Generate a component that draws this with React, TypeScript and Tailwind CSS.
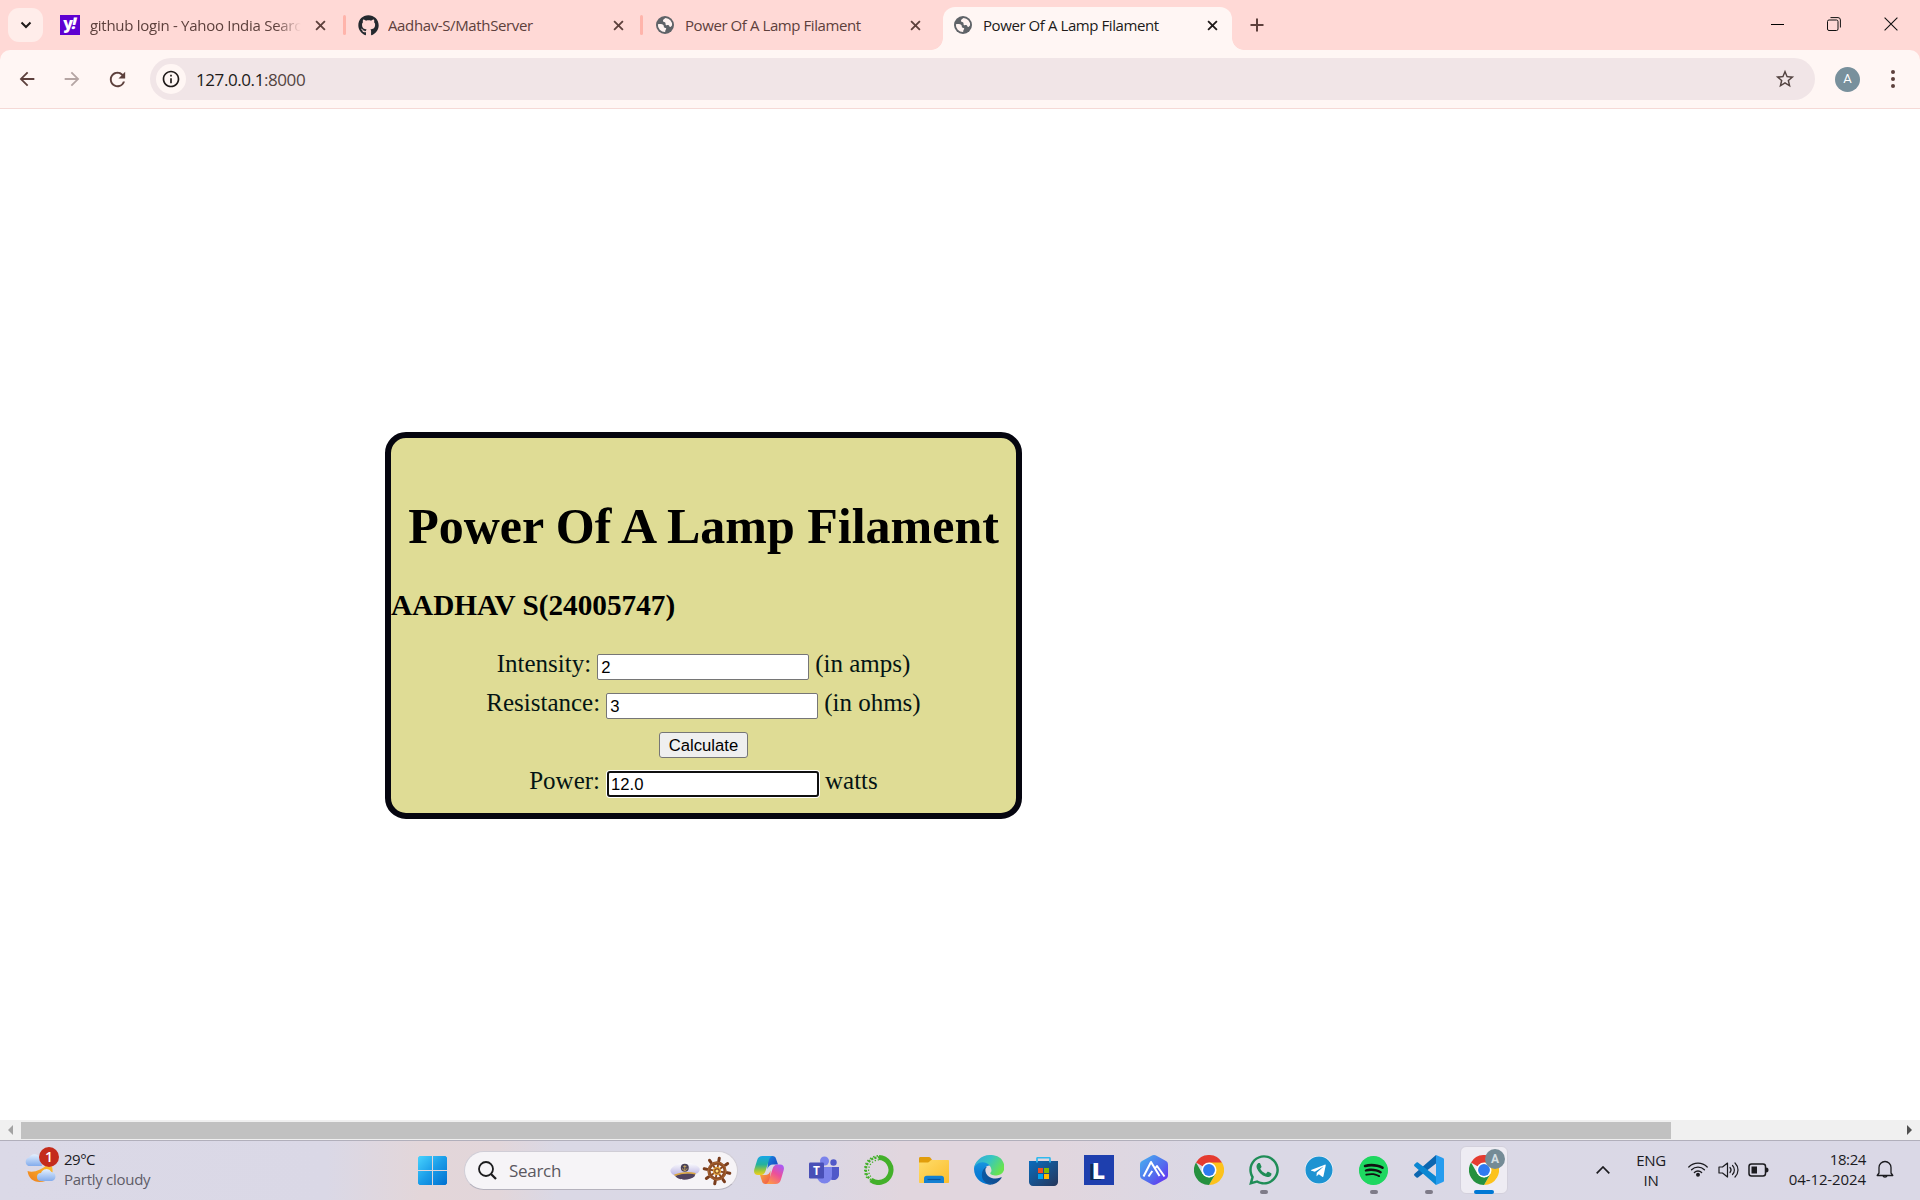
import React from "react";
import { MdArrowBack, MdArrowForward, MdRefresh, MdInfoOutline, MdStarBorder } from "react-icons/md";
import { FaGithub, FaSpotify, FaTelegram, FaWhatsapp } from "react-icons/fa";

const Cross = ({ dark = false }: { dark?: boolean }) => (
  <svg viewBox="0 0 12 12" className={dark ? "size-[11px] text-[#201a19]" : "size-[11px] text-[#5d403c]"} fill="none" stroke="currentColor" strokeWidth="2">
    <path d="M1.2 1.2 10.8 10.8M10.8 1.2 1.2 10.8" />
  </svg>
);

const GlobeIcon = () => (
  <svg viewBox="0 0 18 18" className="size-[18px]">
    <circle cx="9" cy="9" r="9" fill="#5f6368" />
    <path d="M9.600 1.900c-1.700.8-3 2.100-2.600 3.300.4 1 1.900.6 2.400 1.500.4.900-.2 1.700.5 2.200.9.600 1.900-.2 2.800.4.800.6.600 1.500 1.400 1.600.9.100 1.400-.7 2-1.600A7.100 7.100 0 0 0 9.600 1.900z" fill="#fff3f1" />
    <path d="M1.900 8.300c1.600-.4 4.300-.5 5.400.6.900.9.200 2.100 1 2.700.6.500 1.600.2 1.900 1 .2.800-.7 1.200-.9 2.100-.1.600 0 .9-.2 1.400A7.100 7.100 0 0 1 1.900 8.300z" fill="#fff3f1" />
  </svg>
);

const YahooIcon = () => (
  <div className="flex size-5 items-center justify-center bg-[#5f01d1] font-['Open_Sans',sans-serif] text-[16px] leading-none font-extrabold text-white">
    <span className="-mt-1">y</span>
    <span className="-mt-1 -ml-px -skew-x-12">!</span>
  </div>
);

type TabProps = { icon: React.ReactNode; title: string; className: string; titleClass?: string; active?: boolean };

const Tab = ({ icon, title, className, titleClass = "ml-[11px] tracking-[-0.42px]", active }: TabProps) => (
  <div className={`flex h-[43px] items-center ${className}`}>
    <div className="-mt-[7px] flex shrink-0">{icon}</div>
    <div className={`-mt-[7px] min-w-0 flex-1 overflow-hidden text-[15px] whitespace-nowrap ${titleClass} ${active ? "text-[#201a19]" : "text-[#5d403c]"}`}>{title}</div>
    <div className="-mt-[7px] shrink-0"><Cross dark={active} /></div>
  </div>
);

const TabStrip = () => (
  <div className="flex h-[50px] items-end bg-[#ffd9d6]">
    <div className="mb-2 ml-2 flex h-[34px] w-[35px] items-center justify-center rounded-[11px] bg-[#ffedea]">
      <svg viewBox="0 0 12 8" className="h-2 w-3" fill="none" stroke="#201a19" strokeWidth="2"><path d="M1.5 1.5 6 6l4.500-4.500" /></svg>
    </div>
    <Tab className="ml-[17px] w-[266px]" icon={<YahooIcon />} title="github login - Yahoo India Search" titleClass="ml-[10px] mr-[14px] tracking-[-0.28px] [mask-image:linear-gradient(to_right,black_88%,transparent)]" />
    <div className="mb-[15px] ml-[17px] h-5 w-[3px] rounded bg-[#ffb4ab]" />
    <Tab className="ml-[12px] w-[266px]" icon={<FaGithub className="size-[21px] text-[#24292f]" />} title="Aadhav-S/MathServer" titleClass="ml-[9px] tracking-[-0.37px]" />
    <div className="mb-[15px] ml-[16px] h-5 w-[3px] rounded bg-[#ffb4ab]" />
    <Tab className="ml-[13px] w-[265px]" icon={<GlobeIcon />} title="Power Of A Lamp Filament" />
    <div className="ml-[10px] size-3 bg-[radial-gradient(circle_at_0_0,#ffd9d6_11.500px,#fff6f4_12.200px)]" />
    <div className="h-[43px] w-[289px] rounded-t-xl bg-[#fff6f4]">
      <Tab active className="ml-[11px] w-[264px]" icon={<GlobeIcon />} title="Power Of A Lamp Filament" />
    </div>
    <div className="size-3 bg-[radial-gradient(circle_at_100%_0,#ffd9d6_11.500px,#fff6f4_12.200px)]" />
    <svg viewBox="0 0 14 14" className="mb-[18px] ml-[6px] size-[14px]" stroke="#5d403c" strokeWidth="2"><path d="M7 .5v13M.5 7h13" /></svg>
    <div className="mb-[19px] ml-auto flex items-center gap-[43px] pr-[22px]">
      <div className="h-px w-[13px] bg-black" />
      <svg viewBox="0 0 14 14" className="size-[14px]" fill="none" stroke="#111"><rect x=".5" y="3" width="10.500" height="10.500" rx="1.500" /><path d="M3.500.6h7.500a2.400 2.400 0 0 1 2.400 2.400v7.500" /></svg>
      <svg viewBox="0 0 14 14" className="size-[14px]" stroke="#111" strokeWidth="1.100"><path d="m.6.6 12.800 12.800M13.400.6.6 13.400" /></svg>
    </div>
  </div>
);

const Toolbar = () => (
  <div className="h-[59px] bg-[#ffd9d6]">
    <div className="flex h-full items-center rounded-t-[10px] border-b border-[#f5d9d6] bg-[#fff6f4] pl-4 text-[#5d403c]">
      <MdArrowBack className="size-[22px]" />
      <MdArrowForward className="ml-[23px] size-[22px] text-[#b5a5a3]" />
      <MdRefresh className="ml-[23px] size-[23px]" />
      <div className="ml-[21px] flex h-[42px] w-[1665px] items-center rounded-full bg-[#f1e5e7] pl-[6px]">
        <div className="flex size-[30px] items-center justify-center rounded-full bg-[#fff6f4]">
          <MdInfoOutline className="size-5 text-[#201a19]" />
        </div>
        <div className="mt-px ml-[10px] text-[17px] tracking-[-0.42px] text-[#201a19]">127.0.0.1<span className="text-[#534341]">:8000</span></div>
        <MdStarBorder className="mr-[19px] ml-auto size-[22px] text-[#534341]" />
      </div>
      <div className="ml-5 flex size-[25px] items-center justify-center rounded-full bg-[#78909c] font-[Roboto,sans-serif] text-[13px] text-white">A</div>
      <div className="ml-[31px] flex flex-col gap-[3px]">
        <i className="size-1 rounded-full bg-[#5d403c]" /><i className="size-1 rounded-full bg-[#5d403c]" /><i className="size-1 rounded-full bg-[#5d403c]" />
      </div>
    </div>
  </div>
);

const Field = ({ label, value, unit }: { label: string; value: string; unit: string }) => (
  <div className="flex h-[39px] items-start justify-center text-[25px] leading-[29px] text-[#041414]">
    <span>{label}</span>
    <div className="mt-[5px] ml-[6px] flex h-[26px] w-[212px] items-center rounded-[2px] border border-[#767676] bg-white pl-[3px] font-['Liberation_Sans',sans-serif] text-[16.670px] text-black">{value}</div>
    <span className="ml-[6px]">{unit}</span>
  </div>
);

const Page = () => (
  <div className="h-[1011px] bg-white pt-[323px] pl-[385px] font-['Liberation_Serif',serif]">
    <div className="h-[387px] w-[637px] rounded-[21px] border-[6px] border-[#05050f] bg-[#dfdc95]">
      <h1 className="mt-[59px] text-center text-[50px] leading-[58px] font-bold whitespace-nowrap text-black">Power Of A Lamp Filament</h1>
      <h2 className="mt-[34px] text-[29.250px] leading-[32px] font-bold text-black">AADHAV S(24005747)</h2>
      <div className="mt-[28px]">
        <Field label="Intensity:" value="2" unit="(in amps)" />
        <Field label="Resistance:" value="3" unit="(in ohms)" />
        <div className="flex h-[39px] justify-center pt-[5px]">
          <button className="h-[26px] w-[89px] rounded-[3px] border border-[#767676] bg-[#efefef] font-['Liberation_Sans',sans-serif] text-[16.670px] leading-[23px] text-black">Calculate</button>
        </div>
        <div className="flex h-[39px] items-start justify-center text-[25px] leading-[29px] text-[#041414]">
          <span>Power:</span>
          <div className="mt-[5px] ml-[7px] flex h-[26px] w-[212px] items-center rounded-[3px] border-2 border-[#101010] bg-white pl-[2px] font-['Liberation_Sans',sans-serif] text-[16.670px] text-black ring-1 ring-white">12.0</div>
          <span className="ml-[6px]">watts</span>
        </div>
      </div>
    </div>
  </div>
);

const ScrollBar = () => (
  <div className="flex h-5 items-center bg-[#f0f0f0]">
    <svg viewBox="0 0 5 10" className="ml-2 h-[10px] w-[5px] fill-[#a3a3a3]"><path d="M5 0v10L0 5z" /></svg>
    <div className="ml-2 h-[17px] w-[1650px] bg-[#c1c1c1]" />
    <svg viewBox="0 0 5 10" className="mr-2 ml-auto h-[10px] w-[5px] fill-[#505050]"><path d="M0 0v10l5-5z" /></svg>
  </div>
);

const Weather = () => (
  <svg viewBox="0 0 36 36" className="size-9">
    <defs>
      <linearGradient id="cl" x1="0" y1="0" x2="0" y2="1"><stop offset="0" stopColor="#e3f0fe" /><stop offset="1" stopColor="#83acec" /></linearGradient>
      <linearGradient id="mo" x1="1" y1="0" x2="0" y2="1"><stop offset="0" stopColor="#fcc02e" /><stop offset="1" stopColor="#ee7d1d" /></linearGradient>
    </defs>
    <path d="M3.500 23c6 2 14-1 19-6 3-1 6 0 6 4 1 8-4 13-13 13-6.500 0-11-4-12-11z" fill="url(#mo)" />
    <path d="M4.500 18a4.500 4.500 0 0 1 .5-8.500A6.500 6.500 0 0 1 16 9l2 9z" fill="url(#cl)" />
    <path d="M17 33a4 4 0 0 1 0-8 5.800 5.800 0 0 1 10.500-1A4.600 4.600 0 0 1 28 33z" fill="url(#cl)" />
  </svg>
);

const StartIcon = () => (
  <svg viewBox="0 0 29 29" className="size-[29px]">
    <defs><linearGradient id="st" x1="0" y1="0" x2="29" y2="29" gradientUnits="userSpaceOnUse"><stop stopColor="#48d3fe" /><stop offset=".5" stopColor="#1a9ce8" /><stop offset="1" stopColor="#0070d0" /></linearGradient></defs>
    <path d="M1.500 0H14v14H0V1.500zM15 0h12.500L29 1.500V14H15zM0 15h14v14H1.500L0 27.500zM15 15h14v12.500L27.500 29H15z" fill="url(#st)" />
  </svg>
);

const CapIcon = () => (
  <svg viewBox="0 0 30 20" className="h-5 w-[30px]">
    <defs><linearGradient id="cap" x1="0" y1="0" x2="0" y2="1"><stop offset="0" stopColor="#fff" /><stop offset="1" stopColor="#b9b2e2" /></linearGradient></defs>
    <path d="M4 12h21.500l-.8 3.200c-3 3.400-11.700 4.300-15.700 2.600C6 16.800 4.500 14.500 4 12z" fill="#51435f" />
    <path d="M.3 9.500C2 5 9 1.500 15 1.500S28 4 29.700 7.500c.3 2.700-1.500 4.700-4.200 5.500-6-1.300-14-.5-20 1.700C2.500 13.800.500 12.200.3 9.500z" fill="url(#cap)" />
    <path d="M4.500 14.300c6-2.500 14-3.300 21-1.500" fill="none" stroke="#dba53c" strokeWidth="1.600" />
    <circle cx="14.800" cy="6.800" r="4" fill="#4a4257" />
    <path d="M14.800 4.200v5.300M13.200 5.400h3.200M12.500 7.400c.5 2.900 4.100 2.900 4.600 0" fill="none" stroke="#d8b360" strokeWidth=".8" />
  </svg>
);

const WheelIcon = () => (
  <svg viewBox="-15 -15 30 30" className="size-[30px]" fill="none">
    {[10, 55, 100, 145, 190, 235, 280, 325].map((a) => (
      <g key={a} transform={`rotate(${a})`} strokeLinecap="round">
        <path d="M0-2V-13" stroke="#86461f" strokeWidth="1.800" />
        <path d="M0-10.500V-13" stroke="#7a3d1d" strokeWidth="3" />
      </g>
    ))}
    <circle r="8" stroke="#8f4d25" strokeWidth="3.300" />
    <circle r="8.700" stroke="#b06d36" strokeWidth=".7" />
    <circle r="3.400" fill="#8c4c22" stroke="#e2a33c" strokeWidth="1.200" />
    <circle r="1.500" fill="#ffe07c" />
  </svg>
);

const CopilotIcon = () => (
  <svg viewBox="0 0 30 28" className="h-7 w-[30px]">
    <defs>
      <linearGradient id="c1" x1="0" y1="0" x2="0" y2="1"><stop stopColor="#16a6e8" /><stop offset=".45" stopColor="#25b29d" /><stop offset=".75" stopColor="#9cc63a" /><stop offset="1" stopColor="#f3cf1c" /></linearGradient>
      <linearGradient id="c2" x1=".8" y1="0" x2=".2" y2="1"><stop stopColor="#a95bf5" /><stop offset=".45" stopColor="#ec4f9a" /><stop offset="1" stopColor="#ff9c42" /></linearGradient>
      <linearGradient id="c3" x1="0" y1="0" x2="1" y2="1"><stop stopColor="#1b86e0" /><stop offset="1" stopColor="#153fbd" /></linearGradient>
      <linearGradient id="c4" x1="0" y1="0" x2="1" y2="1"><stop stopColor="#f6b23b" /><stop offset="1" stopColor="#f2514c" /></linearGradient>
    </defs>
    <path d="M14 0h4.500c2 0 3 1 3.500 2.800L24 8.500h-5c-3 0-4.500 1.500-5.500 4.500z" fill="url(#c3)" />
    <path d="M16 28h-4.500c-2 0-3-1-3.500-2.800L6 19h5c3 0 4.500-1.500 5.500-4.500z" fill="url(#c4)" />
    <path d="M8.500 0h10c-2 .4-3 2-3.700 4.500l-3.300 10.500c-.9 2.900-2.500 4-5 4H4c-3.500 0-4.600-2.500-3.600-6L3.200 4C4 1.400 5.700 0 8.500 0z" fill="url(#c1)" />
    <path d="M21.500 28h-10c2-.4 3-2 3.700-4.500L18.500 13c.9-2.900 2.500-4.500 5-4.500H26c3.500 0 4.600 2.500 3.600 6L26.800 24c-.8 2.600-2.500 4-5.300 4z" fill="url(#c2)" />
  </svg>
);

const TeamsIcon = () => (
  <svg viewBox="0 0 30 28" className="h-7 w-[30px]">
    <circle cx="24.500" cy="6.500" r="3.200" fill="#5059c9" /><circle cx="15.500" cy="5" r="4.500" fill="#7b83eb" />
    <path d="M20 11h10v8a5.500 5.500 0 0 1-8 4.500z" fill="#5059c9" />
    <path d="M8 11h15v9a7.500 7.500 0 0 1-15 0z" fill="#7b83eb" />
    <rect y="6.500" width="15" height="16" rx="1.300" fill="#4950b7" />
    <text x="7.500" y="18.800" textAnchor="middle" fontSize="12" fontWeight="700" fill="#fff" fontFamily="Open Sans, sans-serif">T</text>
  </svg>
);

const RingIcon = () => (
  <svg viewBox="0 0 30 30" className="size-[30px]" fill="none" stroke="#43b02a">
    <path d="M15 2.500A12.500 12.500 0 1 1 7 25" strokeWidth="5" />
    <path d="M16 2.500A12.500 12.500 0 0 0 7 25" strokeWidth="2.300" strokeDasharray="2.200 1.300" />
    <path d="M14 .9A14 14 0 0 0 4 24" strokeWidth="1.600" strokeDasharray="1.500 2" />
    <path d="M15 4.800A10.500 10.500 0 0 0 7 22" strokeWidth="1.300" strokeDasharray="1.300 1.800" />
  </svg>
);

const FolderIcon = () => (
  <svg viewBox="0 0 30 30" className="size-[30px]">
    <defs><linearGradient id="fo" x1="0" y1="0" x2="1" y2="1"><stop stopColor="#ffdc6a" /><stop offset="1" stopColor="#fbbd2c" /></linearGradient></defs>
    <path d="M0 3.500C0 2.500.6 2 1.500 2h8c1 0 1.500.3 2.200 1L13 5v4H0z" fill="#e19d0c" />
    <path d="M0 7.500h9c1.500 0 2-2.500 3.500-2.500H29c.6 0 1 .4 1 1v21c0 .6-.4 1-1 1H1c-.6 0-1-.4-1-1z" fill="url(#fo)" />
    <path d="M5 28v-4.500c0-1.800 1-2.700 2.700-2.700h14.600c1.700 0 2.700.9 2.700 2.700V28z" fill="#1480d2" />
    <path d="M8.500 24.500h13" stroke="#0b549b" strokeWidth="1.200" />
  </svg>
);

const EdgeIcon = () => (
  <svg viewBox="0 0 256 256" className="size-[30px]">
    <defs>
      <linearGradient id="e1" x1="0" y1="0" x2="1" y2="0"><stop stopColor="#0c59a4" /><stop offset="1" stopColor="#114a8b" /></linearGradient>
      <linearGradient id="e2" x1="0" y1="0" x2="0" y2="1"><stop stopColor="#1b9de2" /><stop offset=".5" stopColor="#0d7fd6" /><stop offset="1" stopColor="#0078d4" /></linearGradient>
      <linearGradient id="e3" x1="0" y1="0" x2="1" y2=".5"><stop stopColor="#35a5dd" /><stop offset=".5" stopColor="#36c5c4" /><stop offset="1" stopColor="#68e34f" /></linearGradient>
    </defs>
    <path d="M231 190c-3 2-7 4-11 5-11 4-23 6-35 6-47 0-88-32-88-74 0-11 7-22 17-27-43 2-54 46-54 72 0 74 68 81 82 81 8 0 20-2 27-5h1c28-9 51-28 66-53 2-3-2-7-5-5z" fill="url(#e1)" />
    <path d="M106 241c-9-5-17-13-23-21-28-39-19-93 20-120 4-3 9-5 11-6 3-2 9-4 17-4 11 0 21 5 28 14 4 6 7 13 7 20 0-1 27-87-85-87C34 37 0 80 0 120c0 19 4 37 12 54 27 57 93 86 154 66-21 6-42 3-60 1z" fill="url(#e2)" />
    <path d="M152 149c-1 1-3 3-3 6 0 3 2 6 6 9 18 13 53 11 53 11 14 0 26-4 37-10 21-12 34-35 34-59 0-25-9-42-13-49C242 11 193 0 143 0 67 0 1 58 0 127c0-36 36-65 79-65 3 0 23 0 42 10 17 9 25 19 31 30 6 11 8 24 8 30s-3 14-8 17z" fill="url(#e3)" transform="scale(.93 1)" />
  </svg>
);

const StoreIcon = () => (
  <svg viewBox="0 0 29 29" className="size-[29px]">
    <defs><linearGradient id="so" x1="0" y1="0" x2="1" y2="1"><stop stopColor="#0a6cbd" /><stop offset="1" stopColor="#26365a" /></linearGradient></defs>
    <path d="M0 4h29v21c0 2.300-1.700 4-4 4H4c-2.300 0-4-1.700-4-4z" fill="url(#so)" />
    <path d="M8 5.500V1.600c0-.6.300-.9 1-.9h11c.7 0 1 .3 1 .9v3.900" fill="none" stroke="#31b9ee" strokeWidth="1.700" />
    <path d="M9 11h5v5H9z" fill="#f25022" /><path d="M15 11h5v5h-5z" fill="#7fba00" /><path d="M9 17h5v5H9z" fill="#00a4ef" /><path d="M15 17h5v5h-5z" fill="#ffb900" />
  </svg>
);

const HexIcon = () => (
  <svg viewBox="0 0 28 30" className="h-[30px] w-7">
    <defs><linearGradient id="hx" x1="0" y1="0" x2="1" y2="1"><stop stopColor="#45b4ef" /><stop offset=".6" stopColor="#5468ee" /><stop offset="1" stopColor="#6a22f2" /></linearGradient></defs>
    <path d="M14 0c1 0 1.700.2 2.500.7L26 6c1.500.9 2 2.100 2 4v10c0 1.900-.5 3.100-2 4l-9.500 5.300c-1.700.9-3.300.9-5 0L2 24c-1.500-.9-2-2.100-2-4V10c0-1.900.5-3.100 2-4L11.500.7C12.300.2 13 0 14 0z" fill="url(#hx)" />
    <path d="M3.500 21.500 11 7l8.500 14M8.500 21.500l3.800-5.500M15 13.500l2-2.500 7.500 10.500" fill="none" stroke="#fff" strokeWidth="2" strokeLinejoin="round" />
  </svg>
);

const ChromeIcon = () => (
  <svg viewBox="0 0 48 48" className="size-[30px]">
    <path d="M24 24 3.200 12A24 24 0 0 1 44.800 12z" fill="#e53b30" />
    <path d="M24 12h20.800A24 24 0 0 1 24 48l10.400-18z" fill="#fcc21c" />
    <path d="M3.200 12 13.600 30 24 36l.4-.2L34.400 30 24 48A24 24 0 0 1 3.200 12z" fill="#25913f" />
    <circle cx="24" cy="24" r="12" fill="#fff" /><circle cx="24" cy="24" r="9.500" fill="#2f7af0" />
  </svg>
);

const CodeIcon = () => (
  <svg viewBox="0 0 30 30" className="size-[30px]">
    <path d="M22 0v8.500L4 22.500c-.5.400-1 .4-1.500 0l-2-1.800c-.6-.6-.6-1.300 0-1.900z" fill="#0b66b0" />
    <path d="M22 30v-8.500L4 7.500c-.5-.4-1-.4-1.500 0l-2 1.800c-.6.600-.6 1.300 0 1.900z" fill="#0b87d2" />
    <path d="M22 0l7 3c.700.4 1 .8 1 1.600v20.800c0 .8-.3 1.200-1 1.600l-7 3z" fill="#259cef" />
  </svg>
);

const AppSlot = ({ children, dot }: { children: React.ReactNode; dot?: boolean }) => (
  <div className="flex h-12 w-[55px] flex-col items-center">
    <div className="mt-[9px] flex h-[30px] items-center">{children}</div>
    {dot && <div className="mt-[5px] h-1 w-2 rounded-full bg-[#7e7b88]" />}
  </div>
);

const Taskbar = () => (
  <div className="flex h-[60px] items-start border-t border-[#b1afbb] bg-[linear-gradient(90deg,#dbd9e7_0%,#dad8e6_17%,#e3d6d9_22%,#e2d6da_26%,#dad8e5_29%,#dad8e6_38%,#dad7e5_42%,#e1d6de_47%,#e1d6de_55%,#dad8e5_63%,#dad8e6_100%)] text-[#1b1b1f]">
    <div className="relative mt-[7px] ml-6 flex w-[394px]">
      <Weather />
      <div className="absolute -top-px left-[15px] flex size-5 items-center justify-center rounded-full bg-[#c42b1c] text-[14px] leading-none font-semibold text-white">1</div>
      <div className="mt-px ml-1 flex flex-col text-[15px] leading-5">
        <span className="tracking-[-0.5px]">29°C</span>
        <span className="tracking-[-0.28px] text-[#5f5d68]">Partly cloudy</span>
      </div>
    </div>
    <div className="mt-[15px]"><StartIcon /></div>
    <div className="mt-[10px] ml-[17px] flex h-[39px] w-[274px] items-center rounded-full border border-b-[#b5b2bd] border-[#d0cdd6] bg-[#f6f4f7] pl-[13px]">
      <svg viewBox="0 0 19 19" className="size-[19px]" fill="none" stroke="#1c1c1e"><circle cx="8" cy="8" r="7" strokeWidth="1.800" /><path d="m13 13 5 5" strokeWidth="2.300" /></svg>
      <span className="ml-3 text-[17px] tracking-[-0.3px] text-[#5a585f]">Search</span>
      <div className="mr-[5px] ml-auto flex items-center gap-[2px]"><CapIcon /><WheelIcon /></div>
    </div>
    <div className="mt-[5px] ml-[3px] flex">
      <AppSlot><CopilotIcon /></AppSlot>
      <AppSlot><TeamsIcon /></AppSlot>
      <AppSlot><RingIcon /></AppSlot>
      <AppSlot><FolderIcon /></AppSlot>
      <AppSlot><EdgeIcon /></AppSlot>
      <AppSlot><div className="mt-[2px]"><StoreIcon /></div></AppSlot>
      <AppSlot><div className="flex size-[30px] items-center justify-center bg-[#1e3fae] font-['Open_Sans',sans-serif] text-[23px] leading-none font-extrabold text-white [text-shadow:-3px_1px_0_#0d2a56]">L</div></AppSlot>
      <AppSlot><HexIcon /></AppSlot>
      <AppSlot><ChromeIcon /></AppSlot>
      <AppSlot dot><FaWhatsapp className="size-[34px] text-[#1f8d57]" /></AppSlot>
      <AppSlot><div className="flex size-7 items-center justify-center rounded-full bg-white"><FaTelegram className="size-7 text-[#1d93d2]" /></div></AppSlot>
      <AppSlot dot><div className="flex size-[29px] items-center justify-center rounded-full bg-[#1ed760] bg-[radial-gradient(circle,#111_60%,#1ed760_62%)]"><FaSpotify className="size-[29px] text-[#1ed760]" /></div></AppSlot>
      <AppSlot dot><CodeIcon /></AppSlot>
      <div className="relative ml-1 flex h-12 w-12 flex-col items-center rounded-md border border-[#d3d0dc] bg-[#eeecf3]">
        <div className="mt-2"><ChromeIcon /></div>
        <div className="mt-[5px] h-1 w-5 shrink-0 rounded-full bg-[#0078d4]" />
        <div className="absolute top-[2px] right-[2px] flex size-5 items-center justify-center rounded-full bg-[#748b96] font-[Roboto,sans-serif] text-[12px] font-bold text-[#d4dfe4]">A</div>
      </div>
    </div>
    <svg viewBox="0 0 14 8" className="mt-[25px] ml-[88px] h-2 w-[14px]" fill="none" stroke="#1b1b1f" strokeWidth="1.700"><path d="M.7 7.300 7 1l6.300 6.300" /></svg>
    <div className="mt-[9px] ml-[26px] flex w-[30px] flex-col items-center text-[15px] leading-5 tracking-[-0.3px]"><span>ENG</span><span>IN</span></div>
    <svg viewBox="0 0 20 16" className="mt-5 ml-[22px] h-4 w-5" fill="none" stroke="#1b1b1f" strokeWidth="1.300" strokeLinecap="round">
      <path d="M.8 6a13 13 0 0 1 18.400 0M3.600 8.800a9 9 0 0 1 12.800 0M6.400 11.500a5.100 5.100 0 0 1 7.200 0" /><circle cx="10" cy="13.800" r="1.300" fill="#1b1b1f" />
    </svg>
    <svg viewBox="0 0 21 18" className="mt-[20px] ml-[10px] h-[18px] w-[21px]" fill="none" stroke="#1b1b1f" strokeWidth="1.200" strokeLinecap="round" strokeLinejoin="round">
      <path d="M1 6v6h3.500l5 4V2l-5 4zM12 6.500c1.300 1.500 1.300 3.500 0 5M14.500 4.500c2.500 2.500 2.500 6.500 0 9M17 2c4 4 4 10 0 14" />
    </svg>
    <svg viewBox="0 0 21 14" className="mt-[22px] ml-[9px] h-[14px] w-[21px]" fill="none" stroke="#1b1b1f" strokeWidth="1.500">
      <rect x="1" y="1" width="16.500" height="12" rx="2.500" /><path d="M3.500 3.500H9v7H3.500z" fill="#1b1b1f" stroke="none" /><path d="M18 4.500c2 0 2.500 1 2.500 2.500S20 9.500 18 9.500z" fill="#1b1b1f" stroke="none" />
    </svg>
    <div className="mt-2 ml-auto flex flex-col items-end text-[15px] leading-5"><span className="tracking-[-0.4px]">18:24</span><span className="tracking-[-0.1px]">04-12-2024</span></div>
    <svg viewBox="0 0 18 19" className="mt-[19px] mr-[26px] ml-[10px] h-[19px] w-[18px]" fill="none" stroke="#1b1b1f" strokeWidth="1.300" strokeLinejoin="round">
      <path d="M3 13V7.500a6 6 0 0 1 12 0V13l1.800 2.500H1.200zM6.800 15.500a2.300 2.300 0 0 0 4.400 0" />
    </svg>
  </div>
);

export default function App() {
  return (
    <div className="flex h-[1200px] w-[1920px] flex-col overflow-hidden bg-white font-['Open_Sans','Noto_Sans',sans-serif]">
      <TabStrip />
      <Toolbar />
      <Page />
      <ScrollBar />
      <Taskbar />
    </div>
  );
}
